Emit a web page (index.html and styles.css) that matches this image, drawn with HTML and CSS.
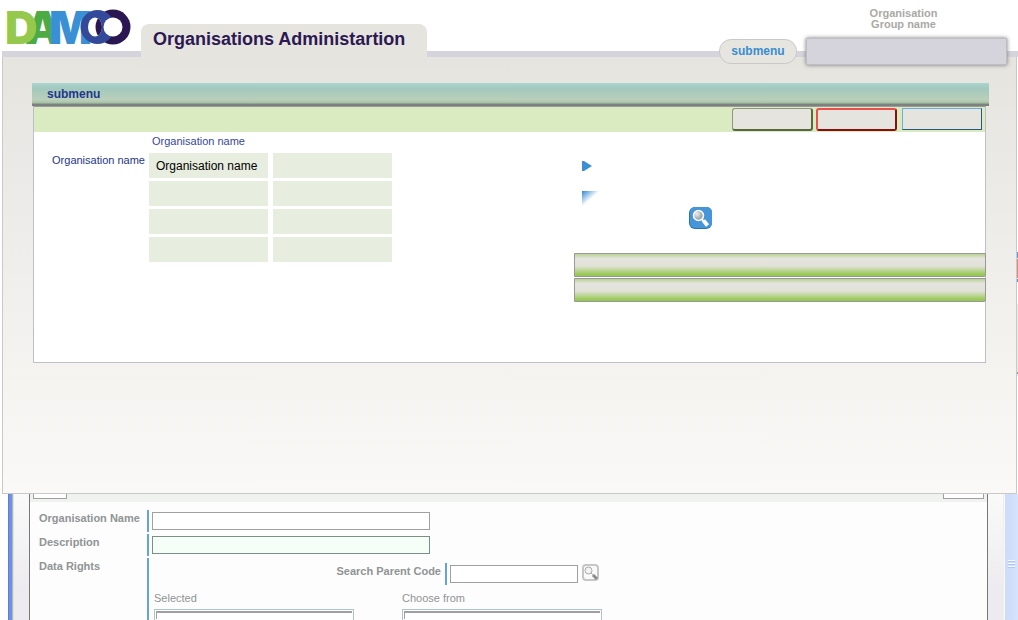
FILE: index.html
```html
<!DOCTYPE html>
<html lang="en">
<head>
<meta charset="utf-8">
<title>Organisations Administartion</title>
<link rel="stylesheet" href="styles.css">
</head>
<body>
<header class="top">
  <svg class="logo" width="139" height="51" viewBox="2 0 139 51" role="img" aria-label="Damco">
    <defs><clipPath id="hole"><ellipse cx="95" cy="27" rx="7" ry="9.500"/></clipPath></defs>
    <text class="mark mark-a" x="25" y="44">A</text>
    <text class="mark mark-d" x="5" y="44">D</text>
    <text class="mark mark-m" x="49" y="44">M</text>
    <circle cx="113" cy="27" r="17.500" fill="#2a1650"/>
    <circle cx="97.500" cy="27" r="17" fill="#33499a"/>
    <g clip-path="url(#hole)">
      <rect x="86" y="16" width="20" height="22" fill="#fff"/>
      <circle cx="112" cy="27" r="16.500" fill="#2a1650"/>
    </g>
    <circle cx="113" cy="27" r="9.500" fill="#fff"/>
  </svg>
  <h1 class="tab">Organisations Administartion</h1>
  <a class="pill" href="#">submenu</a>
  <div class="group">
    <label class="group-label" for="group">Organisation<br>Group name</label>
    <input class="group-box" id="group" type="text">
  </div>
</header>

<div class="stage">
  <main class="panel">
    <h2 class="ribbon">submenu</h2>
    <section class="card">
      <div class="toolbar">
        <button class="action action-green" type="button" aria-label="Save"></button>
        <button class="action action-red" type="button" aria-label="Delete"></button>
        <button class="action action-blue" type="button" aria-label="Edit"></button>
      </div>
      <div class="content">
        <div class="side-label">Organisation name</div>
        <div class="names">
          <div class="names-title">Organisation name</div>
          <table class="grid">
            <tr><td>Organisation name</td><td></td></tr>
            <tr><td></td><td></td></tr>
            <tr><td></td><td></td></tr>
            <tr><td></td><td></td></tr>
          </table>
        </div>
        <div class="extras">
          <svg class="arrow" width="10" height="10" viewBox="0 0 10 10"><path d="M0 0H2L10 5L2 10H0Z" fill="#3b8fd2"/></svg>
          <svg class="corner" width="18" height="15" viewBox="0 0 18 15">
            <defs><linearGradient id="fade" gradientUnits="userSpaceOnUse" x1="0" y1="0" x2="8" y2="9"><stop offset="0" stop-color="#3088d0"/><stop offset="1" stop-color="#fff"/></linearGradient></defs>
            <path d="M0 0H18L0 15Z" fill="url(#fade)"/>
          </svg>
          <button class="find" type="button" aria-label="Search">
            <svg width="24" height="23" viewBox="0 0 24 23">
              <defs><radialGradient id="glass" cx=".35" cy=".35"><stop offset="0" stop-color="#eee"/><stop offset="1" stop-color="#9aa9b3"/></radialGradient></defs>
              <rect width="23" height="22" rx="6" fill="#2674b4"/>
              <rect x="1" width="22" height="21" rx="5" fill="#4595d8"/>
              <circle cx="9.500" cy="8.500" r="5" fill="url(#glass)" stroke="#fff" stroke-width="1.500"/>
              <path d="M13 12.500L14.500 14" stroke="#fff" stroke-width="2"/>
              <path d="M14.500 13.500L18.500 18.500" stroke="#fff" stroke-width="4"/>
            </svg>
          </button>
          <button class="bar" type="button" aria-label="First section"></button>
          <button class="bar" type="button" aria-label="Second section"></button>
        </div>
      </div>
    </section>
  </main>
</div>

<div class="back">
  <div class="edge-blue"></div>
  <div class="gutter"></div>
  <form class="form">
    <div class="form-head"><span class="stub"></span><span class="stub stub-wide"></span></div>
    <div class="row">
      <label class="name" for="org">Organisation Name</label>
      <div class="value"><input class="field" id="org" type="text"></div>
    </div>
    <div class="row">
      <label class="name" for="desc">Description</label>
      <div class="value"><input class="field field-green" id="desc" type="text"></div>
    </div>
    <div class="row row-rights">
      <div class="name">Data Rights</div>
      <div class="value rights">
        <div class="parent">
          <label class="parent-label" for="parent">Search Parent Code</label>
          <div class="value parent-value">
            <input class="field field-short" id="parent" type="text">
            <button class="lookup" type="button" aria-label="Look up">
              <svg width="17" height="17" viewBox="0 0 17 17">
                <rect x="1" y="1" width="15" height="15" rx="3" fill="#fafafa" stroke="#c6c6c6" stroke-width="2"/>
                <circle cx="6.500" cy="6.500" r="3.500" fill="#f3f3f3" stroke="#aaa"/>
                <path d="M9 9L11 11" stroke="#aaa"/><path d="M11 11L15 15" stroke="#8c8c8c" stroke-width="3"/>
              </svg>
            </button>
          </div>
        </div>
        <div class="lists">
          <div class="list"><label for="selected">Selected</label><select id="selected" multiple></select></div>
          <div class="list"><label for="choose">Choose from</label><select id="choose" multiple></select></div>
        </div>
      </div>
    </div>
  </form>
  <div class="gutter gutter-right"></div>
  <div class="scroll"><span class="grip"></span></div>
</div>
</body>
</html>
```
FILE: styles.css
```css
* { box-sizing: border-box; }
html, body { height: 100%; }
body {
  margin: 0;
  display: flex;
  flex-direction: column;
  overflow: hidden;
  background: #fff;
  font-family: "Liberation Sans", Arial, sans-serif;
  font-size: 11px;
}
button, input, select { font: inherit; margin: 0; padding: 0; border-radius: 0; outline: 0; }
svg { display: block; }

/* header */
.top {
  display: flex;
  align-items: flex-start;
  flex: none;
  height: 57px;
  margin-left: 2px;
  padding-right: 11px;
  background: linear-gradient(#d5d4dc, #d5d4dc) bottom / 100% 6px no-repeat;
  position: relative;
  z-index: 1;
}
.logo { flex: none; }
.mark { font: 900 45px Inter, sans-serif; }
.mark-d { fill: #94c94e; }
.mark-a { fill: #4cab42; }
.mark-m { fill: #3990d5; }
.tab {
  margin: 24px 0 0;
  width: 286px;
  height: 44px;
  padding: 4px 12px;
  border-radius: 8px 8px 0 0;
  background: #e5e4df;
  color: #2c1852;
  font-size: 18px;
  line-height: 22px;
}
.pill {
  margin: 39px 9px 0 auto;
  width: 78px;
  border: 1px solid #c9c9c9;
  border-radius: 12px;
  background: #e6e5e0;
  color: #3a8dd0;
  font-size: 12px;
  font-weight: bold;
  line-height: 23px;
  text-align: center;
  text-decoration: none;
}
.group { width: 201px; padding-top: 8px; }
.group-label {
  display: block;
  padding-right: 6px;
  color: #aaa9a6;
  font-weight: bold;
  line-height: 11px;
  text-align: center;
}
.group-box {
  display: block;
  width: 100%;
  height: 27px;
  margin-top: 8px;
  border: 1px solid #bdbdc2;
  background: #d5d4dc;
  box-shadow: 0 0 4px #777;
}

/* main panel */
.stage {
  flex: none;
  padding: 0 1px 0 2px;
  background: linear-gradient(#fff 195px, #6b8fd6 195px 201px, #fff 201px 202px, #d98a7a 202px 221px, #fff 221px 222px, #6b8fd6 222px 225px, #fff 225px 247px, #eeeee6 247px 315px, #999 315px 317px, #dde8f4 317px 319px, #fff 319px) right / 1px 100% no-repeat;
}
.panel {
  padding: 26px 27px 130px 29px;
  border: solid #c9c9c9;
  border-width: 0 1px 1px;
  background: linear-gradient(#e5e4df, #faf9f7);
}
.ribbon {
  margin: 0;
  height: 23px;
  padding-left: 15px;
  background: linear-gradient(#a9d5d0, #a3c8bd 25%, #b9cfb9 72%, #afc5ac 84%, #7f9e86 91%, #706a74 96%, #99939a);
  color: #22368c;
  font-size: 12px;
  line-height: 22px;
}
.card {
  min-height: 257px;
  margin: 0 3px 0 1px;
  border: 1px solid #bfbfcb;
  border-top-color: #9a9a9a;
  background: #fff;
}
.toolbar {
  display: flex;
  justify-content: flex-end;
  gap: 3px;
  height: 25px;
  padding: 1px 3px 0 0;
  background: #dbebc1;
}
.action { width: 81px; height: 23px; border: 1px solid; border-radius: 3px; background: #e5e4df; }
.action-green { border-color: #8d9a78 #586840 #586840 #8d9a78; border-width: 1px 2px 2px 1px; }
.action-red { border-color: #e8504c #8b0d0d #8b0d0d #e8504c; border-width: 2px; }
.action-blue { height: 22px; width: 80px; margin-left: 2px; border-radius: 0; border-color: #6baede #29587c #29587c #6baede; }
.content { display: flex; color: #22368c; }
.side-label { width: 115px; padding: 21px 4px 0 0; line-height: 14px; text-align: right; white-space: nowrap; }
.names-title { padding: 2px 0 0 3px; line-height: 14px; color: #35479b; }
.grid { margin-top: 5px; border-spacing: 0; }
.grid td {
  width: 124px;
  height: 28px;
  padding: 0 0 0 7px;
  border: solid #fff;
  border-width: 0 5px 3px 0;
  background: #e7eddf;
  color: #000;
  font-size: 12px;
}
.extras { width: 412px; margin: 0 -1px 0 auto; padding-top: 29px; }
.arrow { margin-left: 8px; }
.corner { margin: 20px 0 1px 8px; }
.find { display: block; margin: 0 0 23px 115px; border: 0; background: none; }
.bar {
  display: block;
  width: 100%;
  height: 24px;
  margin-bottom: 1px;
  border: 1px solid #999;
  border-radius: 0 0 2px 0;
  background: linear-gradient(#b8d38f, #e5e4df 20%, #e1e2d7 55%, #9bc959 92%, #94c94e);
}

/* form behind the panel */
.back { flex: 1; display: flex; min-height: 0; padding-left: 8px; overflow: hidden; }
.edge-blue { width: 6px; background: linear-gradient(90deg, #6578df 1px, #6b91e9 1px 4px, #b9b6ad 4px 5px, #e5e2d5 5px); }
.gutter { width: 15px; background: linear-gradient(#fafafa, #edebef 75%); }
.gutter-right { width: 16px; border-right: 1px solid #eee; }
.form {
  flex: 1;
  display: flex;
  flex-direction: column;
  min-height: 0;
  border: solid #777;
  border-width: 0 1px;
  background: #fdfdfd;
  color: #8f9494;
}
.form-head { flex: none; display: flex; justify-content: space-between; height: 8px; margin-bottom: 8px; padding: 0 3px; background: #f0f2ef; }
.stub { width: 34px; height: 5px; border: solid #a0a0a0; border-width: 0 1px 1px; background: #fff; }
.stub-wide { width: 41px; }
.row { flex: none; display: flex; margin-bottom: 2px; }
.row-rights { flex: 1; min-height: 0; margin: 0; }
.name { width: 117px; padding-left: 9px; font-weight: bold; line-height: 16px; white-space: nowrap; }
.value { display: flex; height: 22px; padding: 2px 0 0 3px; border-left: 2px solid #66a2df; }
.field { width: 278px; height: 18px; border: 1px solid #a0a0a0; background: #fff; }
.field-green { border-color: #7c8e8a; background: #f6fef8; }
.field-short { width: 128px; }
.rights { display: flex; flex-direction: column; height: auto; flex: 1; min-height: 0; padding: 5px 0 0 5px; }
.parent { flex: none; display: flex; margin-bottom: 5px; }
.parent-label { width: 291px; padding-right: 4px; font-weight: bold; line-height: 17px; text-align: right; }
.lookup { margin: -1px 0 0 4px; border: 0; background: none; height: 17px; }
.lists { flex: 1; display: flex; gap: 48px; min-height: 0; }
.list { display: flex; flex-direction: column; width: 200px; min-height: 0; }
.list label { flex: none; margin-bottom: 3px; line-height: 16px; }
.list select {
  flex: 1;
  width: 100%;
  min-height: 0;
  border: 1px solid #b2c1d1;
  border-bottom: 0;
  background: #fff;
  box-shadow: inset 0 0 0 1px #fff, inset 1px 2px 0 1px #a0a0a0;
}
.scroll { width: 14px; padding: 66px 0 0 4px; background: linear-gradient(90deg, #f8f8f5 1px, #cddafa 1px, #d6e3fc); }
.grip { display: block; width: 7px; height: 9px; background: repeating-linear-gradient(#f4f8ff 0 1px, #b0c8ef 1px 2px, #d0defa 2px 3px); }
```
